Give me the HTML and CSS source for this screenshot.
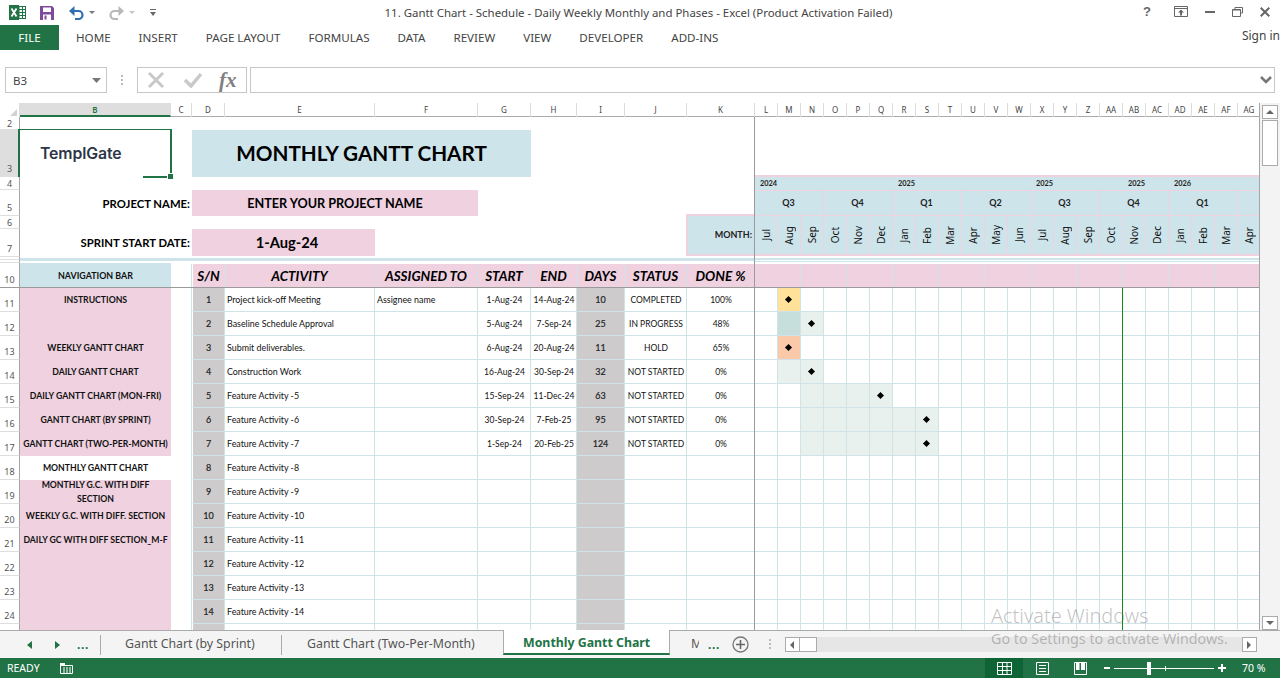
FILE: index.html
```html
<!DOCTYPE html>
<html lang="en">
<head>
<meta charset="utf-8">
<title>11. Gantt Chart - Excel</title>
<link rel="stylesheet" href="styles.css">
</head>
<body>
<div class="app">
  <header class="titlebar">
    <div class="qat">
      <svg class="ic-xl" width="17" height="15" viewBox="0 0 17 15"><rect x="6.500" y="1.500" width="10" height="12" fill="#fff" stroke="#217346"/><path d="M10 1v13M13.500 1v13M7 4.500h10M7 7.500h10M7 10.500h10" stroke="#217346"/><rect x="0" y="0" width="10" height="15" fill="#217346"/><path d="M2.500 3.500l5 8M7.500 3.500l-5 8" stroke="#fff" stroke-width="1.800"/></svg>
      <svg class="ic-save" width="14" height="14" viewBox="0 0 14 14"><path d="M0 0h12l2 2v12H0z" fill="#7d4a9c"/><rect x="3" y="1.500" width="8" height="4.500" fill="#fff"/><rect x="3" y="8.500" width="8" height="5.500" fill="#fff"/><rect x="4.500" y="9.500" width="2" height="4" fill="#7d4a9c"/></svg>
      <svg class="ic-undo" width="15" height="14" viewBox="0 0 15 14"><path d="M4 5h5.500a4 4 0 0 1 0 8H6" fill="none" stroke="#2f6fb0" stroke-width="2.200"/><path d="M5.500 0v10L0 5z" fill="#2f6fb0"/></svg>
      <svg class="ic-caret" width="6" height="3" viewBox="0 0 6 3"><path d="M0 0h6L3 3z" fill="#777"/></svg>
      <svg class="ic-redo" width="15" height="14" viewBox="0 0 15 14"><path d="M11 5H5.500a4 4 0 0 0 0 8H9" fill="none" stroke="#b8b8b8" stroke-width="2.200"/><path d="M9.500 0v10L15 5z" fill="#b8b8b8"/></svg>
      <svg class="ic-caret2" width="6" height="3" viewBox="0 0 6 3"><path d="M0 0h6L3 3z" fill="#c4c4c4"/></svg>
      <svg class="ic-cust" width="6" height="7" viewBox="0 0 6 7"><path d="M0 0h6v1H0zM0 3h6L3 7z" fill="#666"/></svg>
    </div>
    <div class="doc-title">11. Gantt Chart - Schedule - Daily Weekly Monthly and Phases - Excel (Product Activation Failed)</div>
    <div class="winctl">
      <span class="help">?</span>
      <svg width="14" height="11" viewBox="0 0 14 11"><path d="M.5.500h13v10H.5zM.5 2.500h13" fill="none" stroke="#666"/><path d="M7 3.500l3 3H8v3H6v-3H4z" fill="#666"/></svg>
      <svg width="10" height="2" viewBox="0 0 10 2"><rect width="10" height="2" fill="#666"/></svg>
      <svg width="11" height="10" viewBox="0 0 11 10"><path d="M3 2V.500h7.500V6H8.500M.5 2.500h8V9.500h-8z" fill="none" stroke="#666"/><path d="M.5 3h8" stroke="#666"/></svg>
      <svg width="10" height="10" viewBox="0 0 10 10"><path d="M.7.700l8.600 8.600M9.300.700L.7 9.300" stroke="#666" stroke-width="2"/></svg>
    </div>
  </header>

  <nav class="ribbon">
    <span class="file-tab">FILE</span>
    <ul class="rib-tabs">
      <li>HOME</li><li>INSERT</li><li>PAGE LAYOUT</li><li>FORMULAS</li><li>DATA</li><li>REVIEW</li><li>VIEW</li><li>DEVELOPER</li><li>ADD-INS</li>
    </ul>
    <span class="signin">Sign in</span>
  </nav>

  <div class="formula">
    <div class="namebox"><span>B3</span><svg width="9" height="5" viewBox="0 0 9 5"><path d="M0 0h9L4.500 5z" fill="#777"/></svg></div>
    <div class="fdots"></div>
    <div class="fbtns">
      <svg width="18" height="16" viewBox="0 0 18 16"><path d="M2 1l14 14M16 1L2 15" stroke="#c9c9c9" stroke-width="3"/></svg>
      <svg width="20" height="16" viewBox="0 0 20 16"><path d="M2 8l6 6L18 2" fill="none" stroke="#c9c9c9" stroke-width="3.500"/></svg>
      <span class="fx">fx</span>
    </div>
    <div class="finput"><svg width="12" height="8" viewBox="0 0 12 8"><path d="M1 1l5 5 5-5" fill="none" stroke="#777" stroke-width="2.600"/></svg></div>
  </div>

  <main class="workarea">
    <section class="sheet">
      <div class="colhead">
        <div class="corner"></div>
        <div class="sel">B</div><div>C</div><div>D</div><div>E</div><div>F</div><div>G</div><div>H</div><div>I</div><div>J</div><div>K</div>
        <div>L</div><div>M</div><div>N</div><div>O</div><div>P</div><div>Q</div><div>R</div><div>S</div><div>T</div><div>U</div><div>V</div><div>W</div><div>X</div><div>Y</div><div>Z</div><div>AA</div><div>AB</div><div>AC</div><div>AD</div><div>AE</div><div>AF</div><div>AG</div>
      </div>

      <div class="top">
        <div class="rh t2">2</div>
        <div class="rh t3 rh-sel">3</div>
        <div class="rh t4">4</div>
        <div class="rh t5">5</div>
        <div class="rh t6">6</div>
        <div class="rh t7">7</div>
        <div class="rh t8"></div>
        <div class="rh t9"></div>

        <div class="logo">
          <span class="logo-text">TemplGate</span>
          <span class="sel-box"></span><span class="sel-bottom"></span><span class="sel-handle"></span>
        </div>
        <div class="title">MONTHLY GANTT CHART</div>
        <div class="lbl lbl-name">PROJECT NAME:</div>
        <div class="project">ENTER YOUR PROJECT NAME</div>
        <div class="lbl lbl-date">SPRINT START DATE:</div>
        <div class="start">1-Aug-24</div>
        <div class="month-lbl">MONTH:</div>
        <div class="band"></div>
        <div class="band-right"></div>

        <div class="timeline">
          <div class="years">
            <span class="y y1">2024</span><span class="y y7">2025</span><span class="y y13">2025</span><span class="y y17">2025</span><span class="y y19">2026</span>
          </div>
          <div class="quarters">
            <span>Q3</span><span>Q4</span><span>Q1</span><span>Q2</span><span>Q3</span><span>Q4</span><span>Q1</span><span></span>
          </div>
          <div class="months">
            <span><b>Jul</b></span><span><b>Aug</b></span><span><b>Sep</b></span><span><b>Oct</b></span><span><b>Nov</b></span><span><b>Dec</b></span><span><b>Jan</b></span><span><b>Feb</b></span><span><b>Mar</b></span><span><b>Apr</b></span><span><b>May</b></span><span><b>Jun</b></span><span><b>Jul</b></span><span><b>Aug</b></span><span><b>Sep</b></span><span><b>Oct</b></span><span><b>Nov</b></span><span><b>Dec</b></span><span><b>Jan</b></span><span><b>Feb</b></span><span><b>Mar</b></span><span><b>Apr</b></span>
          </div>
        </div>
      </div>

      <div class="row head">
        <div class="rh">10</div>
        <div class="navtitle">NAVIGATION BAR</div>
        <div></div>
        <div class="h h-sn">S/N</div><div class="h">ACTIVITY</div><div class="h">ASSIGNED TO</div><div class="h">START</div><div class="h">END</div><div class="h">DAYS</div><div class="h">STATUS</div><div class="h">DONE %</div>
        <div class="ghead"><i></i><i></i><i></i><i></i><i></i><i></i><i></i><i></i><i></i><i></i><i></i></div>
      </div>

      <div class="body">
        <div class="row"><div class="rh">11</div><div class="nav">INSTRUCTIONS</div><div></div><div class="sn">1</div><div class="tx">Project kick-off Meeting</div><div class="tx">Assignee name</div><div class="ct">1-Aug-24</div><div class="ct">14-Aug-24</div><div class="days">10</div><div class="ct">COMPLETED</div><div class="ct">100%</div>
          <div class="gantt"><span class="fill yellow m"><em></em></span></div></div>
        <div class="row"><div class="rh">12</div><div class="nav"></div><div></div><div class="sn">2</div><div class="tx">Baseline Schedule Approval</div><div class="tx"></div><div class="ct">5-Aug-24</div><div class="ct">7-Sep-24</div><div class="days">25</div><div class="ct">IN PROGRESS</div><div class="ct">48%</div>
          <div class="gantt"><span class="fill teal m"></span><span class="fill pale n"><em></em></span></div></div>
        <div class="row"><div class="rh">13</div><div class="nav">WEEKLY GANTT CHART</div><div></div><div class="sn">3</div><div class="tx">Submit deliverables.</div><div class="tx"></div><div class="ct">6-Aug-24</div><div class="ct">20-Aug-24</div><div class="days">11</div><div class="ct">HOLD</div><div class="ct">65%</div>
          <div class="gantt"><span class="fill orange m"><em></em></span></div></div>
        <div class="row"><div class="rh">14</div><div class="nav">DAILY GANTT CHART</div><div></div><div class="sn">4</div><div class="tx">Construction Work</div><div class="tx"></div><div class="ct">16-Aug-24</div><div class="ct">30-Sep-24</div><div class="days">32</div><div class="ct">NOT STARTED</div><div class="ct">0%</div>
          <div class="gantt"><span class="fill pale m"></span><span class="fill pale n"><em></em></span></div></div>
        <div class="row"><div class="rh">15</div><div class="nav">DAILY GANTT CHART (MON-FRI)</div><div></div><div class="sn">5</div><div class="tx">Feature Activity -5</div><div class="tx"></div><div class="ct">15-Sep-24</div><div class="ct">11-Dec-24</div><div class="days">63</div><div class="ct">NOT STARTED</div><div class="ct">0%</div>
          <div class="gantt"><span class="fill pale n"></span><span class="fill pale o"></span><span class="fill pale p"></span><span class="fill pale q"><em></em></span></div></div>
        <div class="row"><div class="rh">16</div><div class="nav">GANTT CHART (BY SPRINT)</div><div></div><div class="sn">6</div><div class="tx">Feature Activity -6</div><div class="tx"></div><div class="ct">30-Sep-24</div><div class="ct">7-Feb-25</div><div class="days">95</div><div class="ct">NOT STARTED</div><div class="ct">0%</div>
          <div class="gantt"><span class="fill pale n"></span><span class="fill pale o"></span><span class="fill pale p"></span><span class="fill pale q"></span><span class="fill pale r"></span><span class="fill pale s"><em></em></span></div></div>
        <div class="row"><div class="rh">17</div><div class="nav">GANTT CHART (TWO-PER-MONTH)</div><div></div><div class="sn">7</div><div class="tx">Feature Activity -7</div><div class="tx"></div><div class="ct">1-Sep-24</div><div class="ct">20-Feb-25</div><div class="days">124</div><div class="ct">NOT STARTED</div><div class="ct">0%</div>
          <div class="gantt"><span class="fill pale n"></span><span class="fill pale o"></span><span class="fill pale p"></span><span class="fill pale q"></span><span class="fill pale r"></span><span class="fill pale s"><em></em></span></div></div>
        <div class="row"><div class="rh">18</div><div class="nav nav-cur">MONTHLY GANTT CHART</div><div></div><div class="sn">8</div><div class="tx">Feature Activity -8</div><div class="tx"></div><div class="ct"></div><div class="ct"></div><div class="days"></div><div class="ct"></div><div class="ct"></div><div class="gantt"></div></div>
        <div class="row"><div class="rh">19</div><div class="nav nav-wrap">MONTHLY G.C. WITH DIFF SECTION</div><div></div><div class="sn">9</div><div class="tx">Feature Activity -9</div><div class="tx"></div><div class="ct"></div><div class="ct"></div><div class="days"></div><div class="ct"></div><div class="ct"></div><div class="gantt"></div></div>
        <div class="row"><div class="rh">20</div><div class="nav">WEEKLY G.C. WITH DIFF. SECTION</div><div></div><div class="sn">10</div><div class="tx">Feature Activity -10</div><div class="tx"></div><div class="ct"></div><div class="ct"></div><div class="days"></div><div class="ct"></div><div class="ct"></div><div class="gantt"></div></div>
        <div class="row"><div class="rh">21</div><div class="nav">DAILY GC WITH DIFF SECTION_M-F</div><div></div><div class="sn">11</div><div class="tx">Feature Activity -11</div><div class="tx"></div><div class="ct"></div><div class="ct"></div><div class="days"></div><div class="ct"></div><div class="ct"></div><div class="gantt"></div></div>
        <div class="row"><div class="rh">22</div><div class="nav"></div><div></div><div class="sn">12</div><div class="tx">Feature Activity -12</div><div class="tx"></div><div class="ct"></div><div class="ct"></div><div class="days"></div><div class="ct"></div><div class="ct"></div><div class="gantt"></div></div>
        <div class="row"><div class="rh">23</div><div class="nav"></div><div></div><div class="sn">13</div><div class="tx">Feature Activity -13</div><div class="tx"></div><div class="ct"></div><div class="ct"></div><div class="days"></div><div class="ct"></div><div class="ct"></div><div class="gantt"></div></div>
        <div class="row"><div class="rh">24</div><div class="nav"></div><div></div><div class="sn">14</div><div class="tx">Feature Activity -14</div><div class="tx"></div><div class="ct"></div><div class="ct"></div><div class="days"></div><div class="ct"></div><div class="ct"></div><div class="gantt"></div></div>
        <div class="row"><div class="rh"></div><div class="nav"></div><div></div><div class="sn"></div><div class="tx"></div><div class="tx"></div><div class="ct"></div><div class="ct"></div><div class="days"></div><div class="ct"></div><div class="ct"></div><div class="gantt"></div></div>
        <div class="today"></div>
      </div>
      <div class="freeze-v"></div>
      <div class="freeze-h"></div>
    </section>

    <aside class="vscroll">
      <div class="vbtn"><svg width="8" height="4" viewBox="0 0 8 4"><path d="M0 4h8L4 0z" fill="#666"/></svg></div>
      <div class="vthumb"></div>
      <div class="vtrack"></div>
      <div class="vbtn"><svg width="8" height="4" viewBox="0 0 8 4"><path d="M0 0h8L4 4z" fill="#666"/></svg></div>
    </aside>
  </main>

  <div class="tabs">
    <div class="tabnav">
      <svg width="5" height="8" viewBox="0 0 5 8"><path d="M5 0v8L0 4z" fill="#217346"/></svg>
      <svg width="5" height="8" viewBox="0 0 5 8"><path d="M0 0v8l5-4z" fill="#217346"/></svg>
      <span class="more">...</span>
    </div>
    <div class="tab tab-a">Gantt Chart (by Sprint)</div>
    <div class="tab tab-b">Gantt Chart (Two-Per-Month)</div>
    <div class="tab active">Monthly Gantt Chart</div>
    <div class="tab-clip"><span>M</span></div>
    <span class="more more2">...</span>
    <svg class="addtab" width="17" height="17" viewBox="0 0 17 17"><circle cx="8.500" cy="8.500" r="7.500" fill="none" stroke="#777" stroke-width="1.300"/><path d="M8.500 4v9M4 8.500h9" stroke="#666" stroke-width="1.600"/></svg>
    <div class="tabdots"></div>
    <div class="hscroll">
      <div class="hbtn"><svg width="4" height="8" viewBox="0 0 4 8"><path d="M4 0v8L0 4z" fill="#666"/></svg></div>
      <div class="hthumb"></div>
      <div class="htrack"></div>
      <div class="hbtn"><svg width="4" height="8" viewBox="0 0 4 8"><path d="M0 0v8l4-4z" fill="#666"/></svg></div>
    </div>
  </div>

  <footer class="status">
    <span class="ready">READY</span>
    <svg class="macro" width="13" height="12" viewBox="0 0 13 12"><path d="M0 1h5v3H0z" fill="#fff"/><path d="M.5 3.500h12v8H.5z" fill="#217346" stroke="#fff"/><path d="M3 6h2M6 6h2M9 6h2M3 8h2M6 8h2M9 8h2M3 10h2M6 10h2M9 10h2" stroke="#fff"/></svg>
    <div class="views">
      <span class="view on"><svg width="15" height="13" viewBox="0 0 15 13"><path d="M.5.500h14v12H.5zM.5 4.500h14M.5 8.500h14M5.500.500v12M10 .500v12" fill="none" stroke="#fff"/></svg></span>
      <span class="view"><svg width="13" height="13" viewBox="0 0 13 13"><path d="M.5.500h12v12H.5z" fill="none" stroke="#fff"/><path d="M3 3.500h7M3 6.500h7M3 9.500h7" stroke="#fff"/></svg></span>
      <span class="view"><svg width="13" height="13" viewBox="0 0 13 13"><path d="M.5.500h12v12H.5z" fill="none" stroke="#fff"/><path d="M2 1h3.500v7H2zM7 1h4v7H7z" fill="#fff"/></svg></span>
    </div>
    <div class="zoom">
      <span class="zminus"></span>
      <div class="zslider"><span class="ztick"></span><span class="zthumb"></span></div>
      <svg width="8" height="8" viewBox="0 0 8 8"><path d="M4 0v8M0 4h8" stroke="#fff" stroke-width="2"/></svg>
      <span class="zpct">70 %</span>
    </div>
  </footer>

  <div class="watermark">
    <p class="wm1">Activate Windows</p>
    <p class="wm2">Go to Settings to activate Windows.</p>
  </div>
</div>
</body>
</html>
```

FILE: styles.css
```css
:root {
  --cols: 20px 151px 21px 33px 150px 103px 53px 46px 48px 62px 68px repeat(22, 23px);
  --blue: #cee4eb;
  --pink: #efd1e0;
  --line: #cfe3e9;
  --gray: #cdcbcc;
  --green: #217346;
  --ui: "Noto Sans", "Open Sans", sans-serif;
  --cell: Lato, "Open Sans", sans-serif;
}
* { box-sizing: border-box; }
html, body { margin: 0; padding: 0; }
body { width: 1280px; height: 678px; overflow: hidden; background: #fff; font-family: var(--ui); color: #444; }
.app { position: relative; width: 1280px; height: 678px; display: flex; flex-direction: column; overflow: hidden; }

/* title bar */
.titlebar { height: 25px; flex: none; display: flex; align-items: center; position: relative; }
.qat { display: flex; align-items: center; padding-left: 9px; height: 22px; }
.ic-save { margin-left: 14px; }
.ic-undo { margin-left: 15px; }
.ic-caret { margin-left: 5px; }
.ic-redo { margin-left: 14px; }
.ic-caret2 { margin-left: 5px; }
.ic-cust { margin-left: 15px; }
.doc-title { position: absolute; left: 0; right: 3px; top: 4px; text-align: center; font-size: 11.430px; line-height: 17px; color: #444; }
.winctl { position: absolute; right: 10px; top: 4px; display: flex; align-items: center; height: 15px; gap: 17px; }
.help { font: bold 13px/15px "Liberation Sans", sans-serif; color: #666; width: 8px; margin-right: 6px; }

/* ribbon */
.ribbon { height: 25px; flex: none; display: flex; align-items: center; font-size: 11.600px; }
.file-tab { width: 59px; height: 25px; background: var(--green); color: #fff; text-align: center; line-height: 25px; }
.rib-tabs { list-style: none; margin: 0 0 0 17px; padding: 0; display: flex; gap: 28px; flex: 1; }
.signin { margin-top: -5px; color: #444; font-size: 12px; }

/* formula bar */
.formula { height: 26px; flex: none; margin-top: 17px; display: flex; padding-left: 5px; padding-right: 5px; }
.namebox { width: 102px; border: 1px solid #c6c6c6; display: flex; align-items: center; justify-content: space-between; padding: 0 5px 0 7px; font-size: 11.500px; }
.fdots { width: 2px; height: 11px; margin: 8px 14px 0 14px; background: repeating-linear-gradient(#bbb 0 2px, transparent 2px 4px); }
.fbtns { width: 110px; border: 1px solid #c6c6c6; display: flex; align-items: center; padding-left: 9px; gap: 18px; }
.fx { font: italic bold 21px/24px "Liberation Serif", serif; color: #808080; margin-left: -2px; }
.finput { flex: 1; margin-left: 3px; border: 1px solid #c6c6c6; display: flex; align-items: center; justify-content: flex-end; padding-right: 2px; }

/* work area */
.workarea { flex: none; height: 527px; margin-top: 10px; display: flex; }
.sheet { position: relative; width: 1260px; height: 527px; overflow: hidden; font-family: var(--cell); color: #111; border-right: 1px solid #a5a5a5; }
.colhead { display: grid; grid-template-columns: var(--cols); height: 14px; border-bottom: 1px solid #ababab; font: 8px/13px var(--ui); color: #444; text-align: center; }
.colhead > div { border-right: 1px solid #dcdcdc; }
.corner { position: relative; background: #fff; }
.corner::after { content: ""; position: absolute; right: 2px; bottom: 1px; border-style: solid; border-width: 0 0 7px 7px; border-color: transparent transparent #d2d2d2 transparent; }
.colhead .sel { background: #dedede; color: var(--green); border-bottom: 2px solid var(--green); height: 14px; font-weight: 600; }

.top { display: grid; grid-template-columns: var(--cols); grid-template-rows: 13px 47px 13px 26px 13px 28px 3px 3px; }
.rh { grid-column: 1; font: 9px/10px var(--ui); color: #555; text-align: center; display: flex; align-items: flex-end; justify-content: center; padding-bottom: 2px; border-right: 1px solid #a5a5a5; border-bottom: 1px solid #dedede; overflow: hidden; background: #fff; }
.t2 { grid-row: 1; padding-bottom: 0; }
.t3 { grid-row: 2; }
.t4 { grid-row: 3; padding-bottom: 0; }
.t5 { grid-row: 4; }
.t6 { grid-row: 5; padding-bottom: 0; }
.t7 { grid-row: 6; }
.t8 { grid-row: 7; }
.t9 { grid-row: 8; }
.rh-sel { background: #dedede; }

.logo { grid-column: 2; grid-row: 2; position: relative; display: flex; align-items: center; padding-left: 20px; padding-top: 1px; }
.logo-text { font: 600 15.800px/20px Inter, sans-serif; color: #2c3648; letter-spacing: -.1px; }
.sel-box { position: absolute; left: -2px; right: -1px; top: -1px; bottom: 0; border: solid var(--green); border-width: 1.500px 2px 0 2px; }
.sel-bottom { position: absolute; right: -1px; bottom: -1px; width: 29px; height: 2px; background: var(--green); }
.sel-handle { position: absolute; right: -2px; bottom: -2px; width: 5px; height: 5px; background: var(--green); box-shadow: 0 0 0 1px #fff; }
.title { grid-column: 4 / 8; grid-row: 2; background: var(--blue); font: bold 20.700px/47px var(--cell); text-align: center; color: #000; }
.lbl { grid-column: 2 / 4; text-align: right; padding-right: 2px; font: bold 11.300px/1 var(--cell); align-self: center; color: #000; }
.lbl-name { grid-row: 4; padding-top: 1px; }
.lbl-date { grid-row: 6; }
.project { grid-column: 4 / 7; grid-row: 4; background: var(--pink); font: bold 12.650px/27px var(--cell); text-align: center; color: #000; }
.start { grid-column: 4 / 6; grid-row: 6; margin-bottom: 1px; padding-left: 7px; background: var(--pink); font: bold 14.700px/27px var(--cell); text-align: center; color: #000; }
.month-lbl { grid-column: 11; grid-row: 4 / 7; align-self: end; height: 42px; margin-left: -1px; margin-bottom: 1px; background: var(--blue); border: 2px solid var(--pink); border-right: 0; font: bold 9px/38px var(--cell); text-align: right; padding-right: 3px; color: #222; }
.band { grid-column: 2 / 12; grid-row: 7 / 9; height: 3px; margin-top: 1px; background: var(--blue); }
.band-right { grid-column: 12 / -1; grid-row: 7 / 9; height: 4px; margin-top: 1px; background: linear-gradient(var(--blue) 0 2px, #fff 2px 3px, var(--blue) 3px 4px); }

.timeline { grid-column: 12 / -1; grid-row: 3 / 7; margin-top: -2px; margin-bottom: 1px; border-top: 2px solid var(--pink); border-bottom: 2px solid var(--pink); background: var(--blue); display: flex; flex-direction: column; width: 506px; }
.years { height: 14px; display: grid; grid-template-columns: repeat(22, 23px); border-bottom: 1px solid var(--pink); font: bold 7.400px/13px var(--cell); color: #222; }
.y { padding-left: 5px; white-space: nowrap; }
.y1 { grid-column: 1; }
.y7 { grid-column: 7; }
.y13 { grid-column: 13; }
.y17 { grid-column: 17; }
.y19 { grid-column: 19; }
.quarters { height: 25px; display: grid; grid-template-columns: repeat(8, 69px); border-bottom: 1px solid var(--pink); font: bold 9px/24px var(--cell); text-align: center; color: #222; }
.quarters span { border-right: 1px solid var(--pink); padding-right: 1px; }
.months { flex: 1; display: grid; grid-template-columns: repeat(22, 23px); }
.months span { display: flex; align-items: center; justify-content: center; border-right: 1px solid var(--pink); padding-right: 1px; }
.months b { font: 400 10px/12px var(--ui); writing-mode: vertical-rl; transform: rotate(180deg); color: #111; }

.row { display: grid; grid-template-columns: var(--cols); grid-template-rows: minmax(0, 1fr); height: 24px; }
.row.head { height: 25px; }
.head .rh { border-bottom-color: transparent; }
.navtitle { background: var(--blue); font: bold 8.900px/25px var(--cell); text-align: center; margin-bottom: 1px; color: #111; }
.h { background: var(--pink); border-right: 1px solid var(--line); font: italic bold 13.500px/25px var(--cell); text-align: center; white-space: nowrap; overflow: hidden; margin-top: 1px; color: #000; }
.h-sn { border-left: 1px solid #fff; box-shadow: -1px 0 0 var(--line); }
.ghead { grid-column: 12 / -1; display: flex; margin-top: 1px; }
.ghead i { width: 46px; flex: none; background: var(--pink); border-right: 1px solid var(--line); }

.nav { background: var(--pink); font: bold 8.700px/14px var(--cell); text-align: center; display: flex; align-items: center; justify-content: center; white-space: nowrap; color: #111; }
.nav-cur { background: #fff; }
.nav-wrap { white-space: normal; padding: 0 14px; }
.sn { background: var(--gray); border-left: 1px solid #fff; box-shadow: -1px 0 0 var(--line); border-right: 1px solid var(--line); border-bottom: 1px solid var(--line); font: 9px/23px var(--cell); -webkit-text-stroke: .2px #222; text-align: center; color: #222; }
.tx { border-right: 1px solid var(--line); border-bottom: 1px solid var(--line); font: 8.900px/23px var(--cell); padding-left: 2px; white-space: nowrap; overflow: hidden; color: #111; }
.ct { border-right: 1px solid var(--line); border-bottom: 1px solid var(--line); font: 8.500px/24px var(--cell); text-align: center; padding-left: 1px; white-space: nowrap; overflow: hidden; color: #111; }
.days { background: var(--gray); border-right: 1px solid var(--line); border-bottom: 1px solid var(--line); font: 9px/23px var(--cell); -webkit-text-stroke: .2px #222; text-align: center; color: #222; }
.gantt { grid-column: 12 / -1; display: grid; grid-template-columns: repeat(22, 23px); height: 24px; background-image: repeating-linear-gradient(90deg, transparent 0 22px, var(--line) 22px 23px), linear-gradient(transparent 23px, var(--line) 23px); }
.fill { height: 23px; width: 22px; display: flex; align-items: center; justify-content: center; grid-row: 1; padding-right: 1px; }
.fill em { width: 5px; height: 5px; background: #000; transform: rotate(45deg); }
.m { grid-column: 2; }
.n { grid-column: 3; }
.o { grid-column: 4; }
.p { grid-column: 5; }
.q { grid-column: 6; }
.r { grid-column: 7; }
.s { grid-column: 8; }
.yellow { background: #ffe199; }
.teal { background: #c7dfdc; }
.orange { background: #f9c9a9; }
.pale { background: #e9f1ee; }

.body { position: relative; }
.today { position: absolute; left: 1122px; top: 0; bottom: 0; width: 1px; background: #138a13; }
.freeze-v { position: absolute; left: 754px; top: 14px; bottom: 0; width: 1px; background: #9a9a9a; }
.freeze-h { position: absolute; left: 0; right: 0; top: 184px; height: 1px; background: #9a9a9a; }

/* vertical scrollbar */
.vscroll { width: 20px; background: #f3f3f3; display: flex; flex-direction: column; padding: 2px 2px 0 2px; }
.vbtn { height: 14px; flex: none; background: #fff; border: 1px solid #ababab; display: flex; align-items: center; justify-content: center; }
.vthumb { height: 46px; flex: none; background: #fff; border: 1px solid #ababab; margin-top: 1px; }
.vtrack { flex: 1; }

/* sheet tabs */
.tabs { height: 28px; flex: none; background: #f4f4f4; border-top: 1px solid #ababab; display: flex; align-items: center; font-size: 12.350px; color: #555; }
.tabnav { width: 101px; display: flex; align-items: center; padding-left: 27px; height: 20px; gap: 23px; border-right: 1px solid #ababab; }
.more { font-weight: 700; font-size: 12px; color: var(--green); line-height: 8px; letter-spacing: .6px; margin-left: -6px; }
.tab { height: 20px; line-height: 18px; border-right: 1px solid #ababab; white-space: nowrap; }
.tab-a { width: 181px; padding-left: 24px; }
.tab-b { width: 221px; padding-left: 25px; border-right: 0; }
.tab.active { width: 167px; height: 25px; line-height: 26px; margin-top: -1px; align-self: flex-start; background: #fff; border-left: 1px solid #ababab; border-right: 1px solid #ababab; border-bottom: 2px solid var(--green); padding-left: 19px; color: var(--green); font-weight: 700; }
.tab-clip { width: 8px; margin-left: 21px; overflow: hidden; color: #555; line-height: 18px; height: 20px; }
.more2 { margin-left: 9px; }
.addtab { margin-left: 12px; }
.tabdots { width: 2px; height: 11px; margin: 0 14px 0 20px; background: repeating-linear-gradient(#bbb 0 2px, transparent 2px 4px); }
.hscroll { width: 472px; height: 15px; display: flex; background: #e6e6e6; }
.hbtn { width: 15px; height: 15px; flex: none; background: #fff; border: 1px solid #ababab; display: flex; align-items: center; justify-content: center; }
.hthumb { width: 17px; flex: none; background: #fff; border: 1px solid #ababab; border-left: 0; }
.htrack { flex: 1; }

/* status bar */
.status { height: 20px; flex: none; background: var(--green); color: #fff; display: flex; align-items: center; font-size: 10.500px; }
.ready { margin-left: 7px; width: 53px; }
.macro { flex: none; }
.views { margin-left: 912px; display: flex; height: 20px; }
.view { width: 38px; height: 20px; display: flex; align-items: center; justify-content: center; }
.view.on { background: #0f6435; }
.zoom { display: flex; align-items: center; height: 20px; padding-left: 5px; }
.zminus { width: 6px; height: 2px; background: #fff; }
.zslider { position: relative; width: 100px; height: 1px; background: #fff; margin: 0 4px; }
.zthumb { position: absolute; left: 33px; top: -6px; width: 4px; height: 13px; background: #fff; }
.ztick { position: absolute; left: 51px; top: -2px; width: 1px; height: 5px; background: #fff; }
.zpct { margin-left: 16px; white-space: nowrap; }

/* activation watermark */
.watermark { position: absolute; left: 991px; top: 602px; pointer-events: none; color: rgba(90, 90, 90, .38); }
.watermark p { margin: 0; white-space: nowrap; }
.wm1 { font-size: 19.900px; line-height: 27px; font-weight: 300; }
.wm2 { font-size: 14.300px; line-height: 20px; margin-top: 0; }
```
